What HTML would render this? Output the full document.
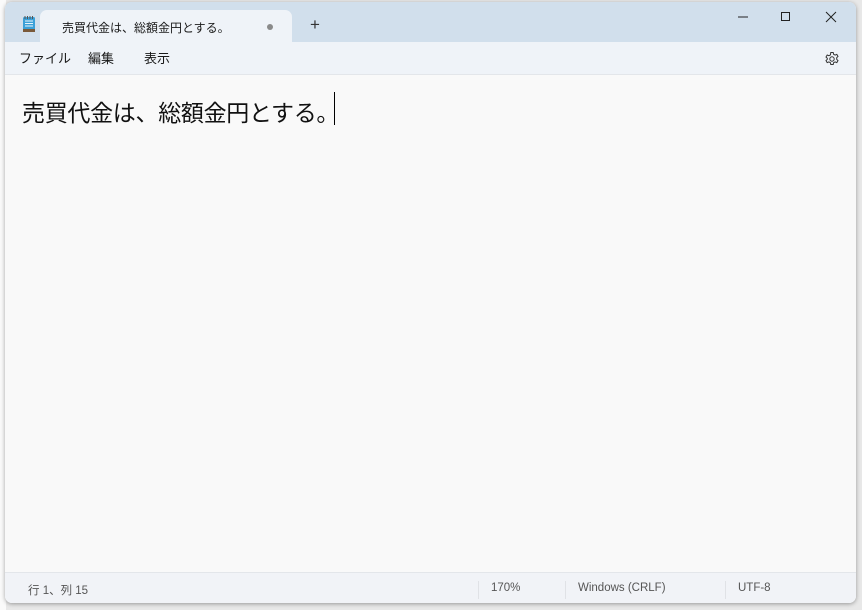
<!DOCTYPE html>
<html><head><meta charset="utf-8"><style>
body{margin:0;width:862px;height:610px;background:#e8e8e8;position:relative;overflow:hidden;font-family:"Liberation Sans","Noto Sans CJK JP",sans-serif}
.bgl{position:absolute;left:0;top:0;width:6px;height:610px;background:#fafafa}
.win{position:absolute;left:5px;top:2px;width:851px;height:601px;background:#f9f9f9;border-radius:7px;overflow:hidden;box-shadow:0 1px 4px rgba(0,0,0,.35)}
.title{position:absolute;left:0;top:0;width:851px;height:40px;background:#d1dfec}
.tab{position:absolute;left:35px;top:8px;width:252px;height:34px;background:#eff3f8;border-radius:7px 7px 0 0}
.tab span{position:absolute;left:22px;top:9px;font-size:12px;color:#1a1a1a}
.dot{position:absolute;left:227px;top:14px;width:6px;height:6px;border-radius:50%;background:#8a8a8a}
.plus{position:absolute;left:305px;top:14px;font-size:17px;color:#333;line-height:1}
.menu{position:absolute;left:0;top:40px;width:851px;height:32px;background:#eff3f8;border-bottom:1px solid #e3e6ea}
.menu span{position:absolute;top:6px;font-size:13px;color:#1a1a1a}
.text{position:absolute;left:17px;top:92px;font-size:23px;color:#111;letter-spacing:-.3px}
.caret{position:absolute;left:329px;top:90px;width:1px;height:33px;background:#000}
.status{position:absolute;left:0;top:570px;width:851px;height:31px;background:#f1f3f7;border-top:1px solid #e3e6ea}
.status span{position:absolute;top:9px;font-size:11.5px;color:#555}
.sep{position:absolute;top:8px;width:1px;height:18px;background:#e0e2e6}
</style></head><body>
<div class="bgl"></div>
<div class="win">
<div class="title"></div>
<svg style="position:absolute;left:17px;top:13px" width="14" height="18" viewBox="0 0 14 18"><rect x="1" y="2" width="12" height="15" rx="1.5" fill="#3aa0d8"/><rect x="1" y="14" width="12" height="3" fill="#7a5a3a"/><path d="M3 6h8M3 8.5h8M3 11h8" stroke="#e8f4fb" stroke-width="1"/><path d="M3 1v3M5.5 1v3M8 1v3M10.5 1v3" stroke="#555" stroke-width="1"/></svg>
<div class="tab"><span>売買代金は、総額金円とする。</span><div class="dot"></div></div>
<div class="plus">+</div>
<svg style="position:absolute;left:733px;top:8px" width="110" height="14"><path d="M0 7h10" stroke="#222" stroke-width="1"/><rect x="43.5" y="2.5" width="8" height="8" fill="none" stroke="#222" stroke-width="1"/><path d="M88 2l10 10M98 2l-10 10" stroke="#222" stroke-width="1"/></svg>
<div class="menu"><span style="left:14px">ファイル</span><span style="left:83px">編集</span><span style="left:139px">表示</span>
<svg style="position:absolute;left:819px;top:9px" width="16" height="16" viewBox="0 0 16 16"><circle cx="8" cy="8" r="2.2" fill="none" stroke="#333"/><path d="M6.8 1.5h2.4l.4 1.8 1.5.8 1.7-.7 1.2 2-1.3 1.3v1.6l1.3 1.3-1.2 2-1.7-.7-1.5.8-.4 1.8H6.8l-.4-1.8-1.5-.8-1.7.7-1.2-2 1.3-1.3V7.3L2 6l1.2-2 1.7.7 1.5-.8z" fill="none" stroke="#333" stroke-width="1"/></svg></div>
<div class="text">売買代金は、総額金円とする。</div>
<div class="caret"></div>
<div class="status"><span style="left:23px">行 1、列 15</span><div class="sep" style="left:473px"></div><span style="left:486px">170%</span><div class="sep" style="left:560px"></div><span style="left:573px">Windows (CRLF)</span><div class="sep" style="left:720px"></div><span style="left:733px">UTF-8</span></div>
</div>
</body></html>
